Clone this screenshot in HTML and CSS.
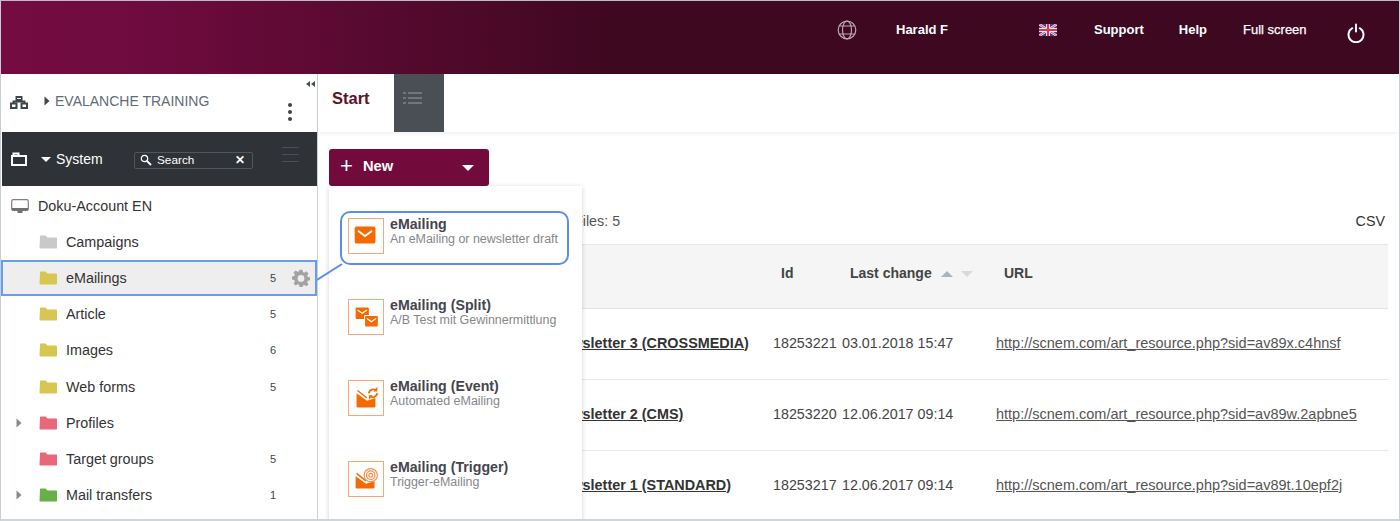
FILE: index.html
```html
<!DOCTYPE html>
<html lang="en">
<head>
<meta charset="utf-8">
<title>Evalanche</title>
<link rel="stylesheet" href="styles.css">
</head>
<body>
<svg class="defs" width="0" height="0" aria-hidden="true">
  <symbol id="folder" viewBox="0 0 18 14"><path d="M1 1.5C1 .8 1.4.5 2 .5h4.5l2 2H17c.6 0 1 .4 1 1v9c0 .6-.4 1-1 1H1.500c-.6 0-1-.4-1-1z" fill="currentColor"/></symbol>
  <symbol id="tri" viewBox="0 0 6 10"><path d="M.5 .5l5 4.500-5 4.500z" fill="currentColor"/></symbol>
</svg>
<div class="app">
  <header class="topbar">
    <svg class="globe" viewBox="0 0 20 20" fill="none" stroke="#bda6ae" stroke-width="1.200"><circle cx="10" cy="10" r="8.800"/><ellipse cx="10" cy="10" rx="4.500" ry="8.800"/><path d="M2.500 6h15M2.500 14h15"/></svg>
    <span class="top-item user">Harald F</span>
    <svg class="flag" viewBox="0 0 18 12"><rect width="18" height="12" fill="#36459a"/><path d="M0 0l18 12M18 0L0 12" stroke="#f4e8ee" stroke-width="2.400"/><path d="M0 0l18 12M18 0L0 12" stroke="#d3394f" stroke-width=".9"/><path d="M9 0v12M0 6h18" stroke="#f4e8ee" stroke-width="4"/><path d="M9 0v12M0 6h18" stroke="#d3394f" stroke-width="2.200"/></svg>
    <span class="top-item support">Support</span>
    <span class="top-item help">Help</span>
    <span class="top-item full">Full screen</span>
    <svg class="power" viewBox="0 0 18 20" fill="none" stroke="#fff" stroke-width="2" stroke-linecap="round"><path d="M5.300 5.200a7.500 7.500 0 1 0 7.400 0"/><path d="M9 1.500v7"/></svg>
  </header>
  <div class="body">
    <aside class="sidebar">
      <div class="account">
        <svg class="sitemap" viewBox="0 0 18 13" fill="none" stroke="#3d444b" stroke-width="2"><rect x="1" y="7.500" width="5.500" height="4.500"/><rect x="11.500" y="7.500" width="5.500" height="4.500"/><rect x="6.500" y="1" width="5" height="3"/><path d="M3.500 7.500V5.500h11v2M9 4v1.500"/></svg>
        <svg class="acc-tri"><use href="#tri"/></svg>
        <span class="acc-name">EVALANCHE TRAINING</span>
        <span class="kebab"><i></i><i></i><i></i></span>
        <svg class="collapse" viewBox="0 0 9 6" fill="#4a4f55"><path d="M4 0v6L0 3zM9 0v6L5 3z"/></svg>
      </div>
      <div class="sysbar">
        <svg class="case" viewBox="0 0 16 14" fill="none" stroke="#fff" stroke-width="2"><rect x="1" y="4" width="14" height="9"/><path d="M2.500 4V1.500h5V4"/></svg>
        <span class="sys-caret"></span>
        <span class="sys-name">System</span>
        <div class="search">
          <svg class="mag" viewBox="0 0 12 12" fill="none" stroke="#fff" stroke-width="1.200"><circle cx="4.500" cy="4.500" r="3.200"/><path d="M7 7l4 4" stroke-width="1.800"/></svg>
          <span class="search-text">Search</span>
          <span class="search-x">✕</span>
        </div>
        <span class="sys-menu"><i></i><i></i><i></i></span>
      </div>
      <ul class="tree">
        <li class="row root">
          <svg class="monitor" viewBox="0 0 18 15"><rect x=".7" y=".7" width="16.600" height="10.600" rx="1.500" fill="none" stroke="#808080" stroke-width="1.200"/><path d="M.7 9h16.600v1c0 1-.6 1.800-1.600 1.800H2.300C1.300 11.800.7 11 .7 10zM6.500 12h5v2h-5z" fill="#707070"/></svg>
          <span class="label">Doku-Account EN</span>
        </li>
        <li class="row"><svg class="folder grey"><use href="#folder"/></svg><span class="label">Campaigns</span></li>
        <li class="row selected"><svg class="folder yellow"><use href="#folder"/></svg><span class="label">eMailings</span><span class="count">5</span>
          <svg class="gear" viewBox="0 0 24 24"><path fill="#a3a3a3" fill-rule="evenodd" d="M10 1h4l.6 3.100 1.900.8L19.200 3.100 22 5.900l-1.800 2.700.8 1.900L24 11v4l-3 .6-.8 1.900 1.800 2.700-2.800 2.800-2.700-1.800-1.900.8L14 24h-4l-.6-3-1.900-.8-2.700 1.800L2 19.200l1.800-2.700L3 14.600 0 14v-4l3-.6.8-1.900L2 4.800 4.800 2l2.700 1.800 1.900-.8zM12 8a4.500 4.500 0 1 0 0 9 4.500 4.500 0 0 0 0-9z"/></svg>
        </li>
        <li class="row"><svg class="folder yellow"><use href="#folder"/></svg><span class="label">Article</span><span class="count">5</span></li>
        <li class="row"><svg class="folder yellow"><use href="#folder"/></svg><span class="label">Images</span><span class="count">6</span></li>
        <li class="row"><svg class="folder yellow"><use href="#folder"/></svg><span class="label">Web forms</span><span class="count">5</span></li>
        <li class="row"><svg class="expander"><use href="#tri"/></svg><svg class="folder red"><use href="#folder"/></svg><span class="label">Profiles</span></li>
        <li class="row"><svg class="folder red"><use href="#folder"/></svg><span class="label">Target groups</span><span class="count">5</span></li>
        <li class="row"><svg class="expander"><use href="#tri"/></svg><svg class="folder green"><use href="#folder"/></svg><span class="label">Mail transfers</span><span class="count">1</span></li>
      </ul>
    </aside>
    <main class="main">
      <nav class="tabs">
        <span class="tab-start">Start</span>
        <span class="tab-list">
          <svg viewBox="0 0 20 14" fill="#6f767c"><rect x="0" y="1" width="3" height="2"/><rect x="5" y="1" width="14" height="2"/><rect x="0" y="6" width="3" height="2"/><rect x="5" y="6" width="14" height="2"/><rect x="0" y="11" width="3" height="2"/><rect x="5" y="11" width="14" height="2"/></svg>
        </span>
      </nav>
      <section class="content">
        <div class="new-wrap">
          <button class="new-btn"><span class="plus">+</span><span class="new-text">New</span><span class="new-caret"></span></button>
          <div class="menu">
            <div class="item active">
              <span class="ico"><svg viewBox="0 0 36 36"><rect x="6" y="8" width="22" height="18" rx="2" fill="#f56a00"/><path d="M9.500 12.500L17 18l7.500-5.500" fill="none" stroke="#fff" stroke-width="2"/></svg></span>
              <span class="txt"><b>eMailing</b><small>An eMailing or newsletter draft</small></span>
            </div>
            <div class="item">
              <span class="ico"><svg viewBox="0 0 36 36"><rect x="7" y="8" width="14" height="12" rx="1" fill="#f56a00"/><path d="M9 10.500l5 3.500 5-3.500" fill="none" stroke="#fff" stroke-width="1.400"/><rect x="16" y="16" width="14" height="12" rx="1" fill="#fff"/><rect x="17" y="17" width="13.500" height="11" rx="1" fill="#f56a00"/><path d="M19 19.500l4.700 3.500 4.800-3.500" fill="none" stroke="#fff" stroke-width="1.400"/></svg></span>
              <span class="txt"><b>eMailing (Split)</b><small>A/B Test mit Gewinnermittlung</small></span>
            </div>
            <div class="item">
              <span class="ico"><svg viewBox="0 0 36 36"><path d="M8 13l11 8 9-3v9a1 1 0 0 1-1 1H9a1 1 0 0 1-1-1z" fill="#f56a00"/><path d="M9 10l10 8" stroke="#f56a00" stroke-width="1.500"/><path d="M21 13a5 5 0 0 1 8-3M30 13a5 5 0 0 1-8 3" fill="none" stroke="#f56a00" stroke-width="2"/><path d="M30 6v5h-4zM21 20v-5h4z" fill="#f56a00"/></svg></span>
              <span class="txt"><b>eMailing (Event)</b><small>Automated eMailing</small></span>
            </div>
            <div class="item">
              <span class="ico"><svg viewBox="0 0 36 36"><path d="M7 15l11 8 9-3v7a1 1 0 0 1-1 1H8a1 1 0 0 1-1-1z" fill="#f56a00"/><path d="M8 12l10 8" stroke="#f56a00" stroke-width="1.500"/><g fill="none" stroke="#f98f4e" stroke-width="1.300"><circle cx="23" cy="14" r="2"/><circle cx="23" cy="14" r="4.500"/><circle cx="23" cy="14" r="7"/></g></svg></span>
              <span class="txt"><b>eMailing (Trigger)</b><small>Trigger-eMailing</small></span>
            </div>
          </div>
        </div>
        <div class="toolbar">
          <span class="files">Files: 5</span>
          <span class="csv">CSV</span>
        </div>
        <table class="grid">
          <colgroup><col class="c-pad"><col class="c-name"><col class="c-id"><col class="c-date"><col class="c-url"></colgroup>
          <thead>
            <tr>
              <th></th><th></th><th>Id</th>
              <th>Last change <span class="sort-up"></span><span class="sort-down"></span></th>
              <th>URL</th>
            </tr>
          </thead>
          <tbody>
            <tr><td></td><td class="name">Newsletter 3 (CROSSMEDIA)</td><td>18253221</td><td>03.01.2018 15:47</td><td class="url">http://scnem.com/art_resource.php?sid=av89x.c4hnsf</td></tr>
            <tr><td></td><td class="name">Newsletter 2 (CMS)</td><td>18253220</td><td>12.06.2017 09:14</td><td class="url">http://scnem.com/art_resource.php?sid=av89w.2apbne5</td></tr>
            <tr><td></td><td class="name">Newsletter 1 (STANDARD)</td><td>18253217</td><td>12.06.2017 09:14</td><td class="url">http://scnem.com/art_resource.php?sid=av89t.10epf2j</td></tr>
          </tbody>
        </table>
      </section>
    </main>
  </div>
  <svg class="connector" viewBox="0 0 26 20"><path d="M0 19L25 3" stroke="#5b8def" stroke-width="2"/></svg>
</div>
</body>
</html>
```
FILE: styles.css
```css
* { box-sizing: border-box; }
html, body { margin: 0; padding: 0; height: 100%; overflow: hidden; background: #fff; }
body { font-family: "Liberation Sans", Arial, sans-serif; color: #333; }
.defs { position: absolute; }
ul { list-style: none; margin: 0; padding: 0; }

.app {
  position: relative;
  width: 1400px;
  height: 521px;
  display: flex;
  flex-direction: column;
  overflow: hidden;
  border-top: 1px solid #b9bec4;
  border-left: 1px solid #c6ced6;
  border-right: 1px solid #c6ced6;
  border-bottom: 2px solid #cdd5dd;
}

/* top bar */
.topbar {
  flex: none;
  height: 73px;
  display: flex;
  align-items: flex-start;
  padding-top: 19px;
  background: linear-gradient(90deg, #740c41 0, #6e0b3e 150px, #3e0820 620px);
  color: #fff;
  font-size: 13px;
  font-weight: 700;
}
.top-item { line-height: 19px; }
.globe { width: 20px; height: 20px; margin-left: 836px; flex: none; }
.user { margin-left: 39px; width: 143px; }
.flag { width: 18px; height: 12px; margin-top: 4px; flex: none; }
.support { margin-left: 37px; }
.help { margin-left: 35px; }
.full { margin-left: 36px; font-weight: 400; -webkit-text-stroke: .25px #fff; }
.power { width: 18px; height: 20px; margin-left: 40px; margin-top: 3px; flex: none; }

.body { flex: 1; display: flex; min-height: 0; }

/* sidebar */
.sidebar {
  flex: none;
  width: 317px;
  padding-left: 1px;
  border-right: 1px solid #c8d3de;
  display: flex;
  flex-direction: column;
}
.account {
  position: relative;
  flex: none;
  height: 58px;
  display: flex;
  align-items: flex-start;
  padding: 19px 0 0 8px;
}
.sitemap { width: 18px; height: 13px; margin-top: 3px; flex: none; }
.acc-tri { width: 6px; height: 10px; margin: 3px 0 0 16px; color: #444; flex: none; }
.acc-name { margin-left: 5px; font-size: 14px; line-height: 16px; color: #5f6b76; }
.kebab { position: absolute; left: 286px; top: 29px; display: flex; flex-direction: column; gap: 3px; }
.kebab i { width: 4px; height: 4px; border-radius: 50%; background: #444; }
.collapse { position: absolute; left: 304px; top: 7px; width: 9px; height: 6px; }

.sysbar {
  flex: none;
  height: 54px;
  display: flex;
  align-items: center;
  background: #2f3338;
  color: #fff;
  padding-left: 9px;
}
.case { width: 16px; height: 14px; flex: none; }
.sys-caret { margin-left: 14px; border: 5px solid transparent; border-top-color: #fff; border-bottom-width: 0; }
.sys-name { margin-left: 5px; font-size: 14px; width: 78px; }
.search {
  width: 119px;
  height: 17px;
  margin-top: 2px;
  display: flex;
  align-items: center;
  border: 1px solid #50565c;
  border-radius: 2px;
  padding-left: 5px;
}
.mag { width: 12px; height: 12px; flex: none; }
.search-text { margin-left: 5px; font-size: 11.800px; width: 78px; }
.search-x { font-size: 11.500px; font-weight: 700; }
.sys-menu { margin-left: 29px; margin-top: -9px; display: flex; flex-direction: column; gap: 6px; }
.sys-menu i { width: 17px; height: 1px; background: #4a4f55; }

.tree { padding-top: 2px; }
.row {
  position: relative;
  height: 36.150px;
  display: flex;
  align-items: center;
  padding-left: 37px;
  font-size: 14.350px;
  color: #333;
}
.root { padding-left: 9px; }
.monitor { width: 18px; height: 15px; margin-right: 9px; flex: none; }
.folder { width: 18px; height: 14px; margin-right: 9px; flex: none; }
.grey { color: #c9c9c9; }
.yellow { color: #d8c653; }
.red { color: #e8677a; }
.green { color: #69b04b; }
.label { line-height: 16px; }
.count { position: absolute; left: 268px; font-size: 11px; color: #444; }
.gear { position: absolute; left: 290px; top: 8px; width: 18px; height: 18px; }
.expander { position: absolute; left: 14px; top: 13px; width: 6px; height: 10px; color: #8a8a8a; }
.selected {
  height: 36px;
  margin-left: -1px;
  padding-left: 36px;
  background: #eee;
  border: 2px solid #6b9bef;
  width: 316px;
}
.selected .count { left: 267px; }
.selected .gear { left: 289px; top: 7px; }

/* main */
.main { flex: 1; min-width: 0; display: flex; flex-direction: column; }
.tabs {
  flex: none;
  height: 58px;
  display: flex;
  box-shadow: 0 2px 4px rgba(0,0,0,.06);
}
.tab-start {
  width: 76px;
  padding: 15px 0 0 14px;
  font-size: 16.500px;
  font-weight: 700;
  color: #5d1226;
}
.tab-list { width: 50px; background: #4a4f55; padding: 17px 0 0 9px; }
.tab-list svg { display: block; width: 20px; height: 14px; }

.content { flex: 1; padding: 17px 11px 0; min-height: 0; }
.new-wrap { position: relative; height: 37px; width: 160px; }
.new-btn {
  width: 160px;
  height: 37px;
  display: flex;
  align-items: center;
  padding: 0 0 0 11px;
  border: 0;
  border-radius: 3px;
  background: #730a3c;
  color: #fff;
  font: 700 14.700px "Liberation Sans", Arial, sans-serif;
}
.plus { font-size: 22px; font-weight: 400; width: 23px; text-align: left; line-height: 19px; margin-top: -4px; }
.new-text { width: 99px; text-align: left; margin-top: -4px; }
.new-caret { border: 6px solid transparent; border-top-color: #fff; border-bottom-width: 0; }

.menu {
  position: absolute;
  left: 0;
  top: 37px;
  z-index: 2;
  width: 253px;
  height: 360px;
  padding: 25px 0 0 11px;
  background: #fff;
  box-shadow: 0 1px 5px rgba(0,0,0,.18);
}
.item {
  width: 229px;
  height: 54px;
  margin-bottom: 27px;
  padding: 5px 0 0 6px;
  display: flex;
  gap: 6px;
  border: 2px solid transparent;
  border-radius: 10px;
}
.active { border-color: #5b8def; }
.ico { flex: none; width: 36px; height: 36px; border: 1px solid #f9a877; }
.ico svg { display: block; width: 34px; height: 34px; }
.txt { display: flex; flex-direction: column; margin-top: -2px; }
.txt b { font-size: 14.200px; line-height: 16px; color: #45454d; white-space: nowrap; }
.txt small { margin-top: 1px; font-size: 12.450px; line-height: 13px; color: #85878c; white-space: nowrap; }

.toolbar {
  height: 58px;
  display: flex;
  justify-content: space-between;
  padding: 26px 3px 0 245px;
  font-size: 14.300px;
  line-height: 18px;
}
.files { color: #555; }
.csv { color: #333; }

.grid { width: 1059px; table-layout: fixed; border-collapse: collapse; font-size: 14.300px; }
.c-pad { width: 224px; }
.c-name { width: 220px; }
.c-id { width: 69px; }
.c-date { width: 154px; }
.c-url { width: 392px; }
thead tr { height: 64px; background: #f5f5f5; border-top: 1px solid #e6e6e6; border-bottom: 1px solid #e3e3e3; }
th { padding: 0 0 7px 8px; text-align: left; font-size: 14px; font-weight: 700; color: #444; white-space: nowrap; }
tbody tr { height: 71px; border-bottom: 1px solid #e8e8e8; }
td { padding: 0 0 3px; white-space: nowrap; color: #444; overflow: visible; }
.name { font-size: 14.400px; font-weight: 700; text-decoration: underline; color: #333; }
.url { font-size: 14.500px; text-decoration: underline; color: #555; }
.sort-up, .sort-down { display: inline-block; margin-left: 5px; border: 6px solid transparent; vertical-align: 1px; }
.sort-up { border-bottom-color: #a3b8c2; border-top-width: 0; }
.sort-down { margin-left: 8px; border-top-color: #d6dadd; border-bottom-width: 0; }

.connector { position: absolute; left: 316px; top: 260px; width: 26px; height: 20px; z-index: 3; }
```
